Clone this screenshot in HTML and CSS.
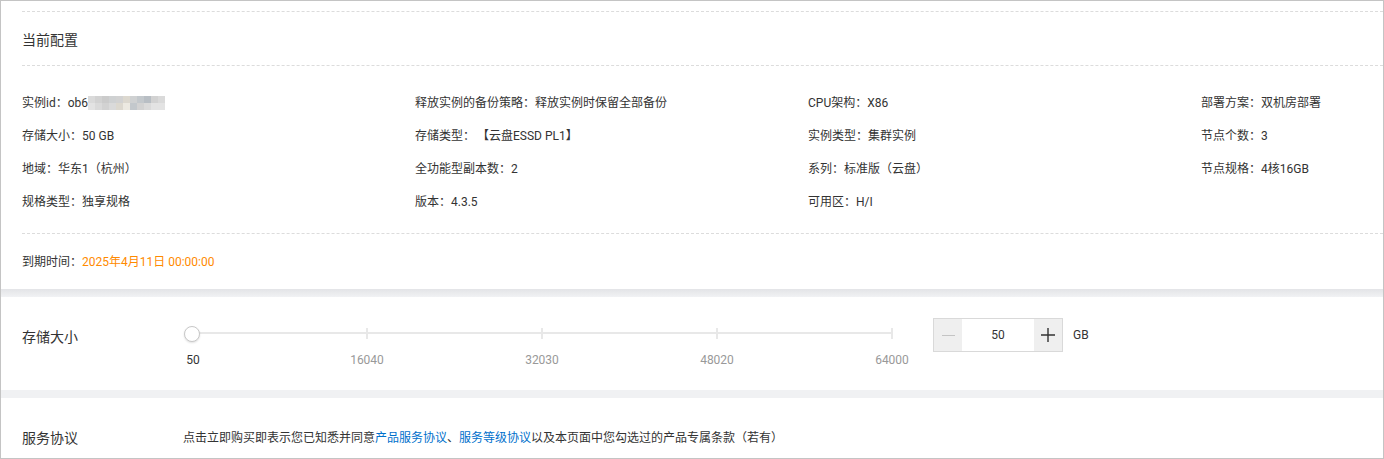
FILE: index.html
```html
<!DOCTYPE html>
<html lang="zh-CN">
<head>
    <meta charset="UTF-8">
    <meta name="viewport" content="width=device-width, initial-scale=1.0">
    <link rel="stylesheet" href="styles.css">
    <title>变配</title>
</head>
<body>
    <div class="page">
        <section class="config">
            <div class="prev-end"></div>
            <h3 class="config-title">当前配置</h3>
            <div class="config-grid">
                <div class="cfg-item">实例id：ob6<span class="mosaic"><i class="s2"></i><i class="s3"></i><i class="s4"></i><i class="s5"></i><i class="s3"></i><i class="s7"></i><i class="s5"></i><i class="s6"></i><i class="s8"></i><i class="s3"></i><i class="s2"></i><i class="s1"></i><i class="s2"></i><i class="s3"></i><i class="s2"></i><i class="s7"></i><i class="s9"></i><i class="s6"></i><i class="s3"></i><i class="s2"></i><i class="s1"></i><i class="s1"></i></span></div>
                <div class="cfg-item">释放实例的备份策略：释放实例时保留全部备份</div>
                <div class="cfg-item">CPU架构：X86</div>
                <div class="cfg-item">部署方案：双机房部署</div>

                <div class="cfg-item">存储大小：50 GB</div>
                <div class="cfg-item">存储类型：<span class="bracket">【云盘ESSD PL1】</span></div>
                <div class="cfg-item">实例类型：集群实例</div>
                <div class="cfg-item">节点个数：3</div>

                <div class="cfg-item">地域：华东1（杭州）</div>
                <div class="cfg-item">全功能型副本数：2</div>
                <div class="cfg-item">系列：标准版（云盘）</div>
                <div class="cfg-item">节点规格：4核16GB</div>

                <div class="cfg-item">规格类型：独享规格</div>
                <div class="cfg-item">版本：4.3.5</div>
                <div class="cfg-item">可用区：H/I</div>
            </div>
            <div class="expire">到期时间：<span class="expire-time">2025年4月11日 00:00:00</span></div>
        </section>

        <div class="band band-shadow"></div>

        <section class="storage">
            <div class="row-label storage-label">存储大小</div>
            <div class="slider">
                <div class="slider-track">
                    <span class="tick t1"></span>
                    <span class="tick t2"></span>
                    <span class="tick t3"></span>
                    <span class="tick t4"></span>
                    <span class="mark mark-active">50</span>
                    <span class="mark t1">16040</span>
                    <span class="mark t2">32030</span>
                    <span class="mark t3">48020</span>
                    <span class="mark t4">64000</span>
                </div>
                <span class="slider-thumb"></span>
            </div>
            <div class="stepper">
                <button type="button" class="step-btn step-disabled">
                    <svg width="13" height="13" viewBox="0 0 13 13"><path d="M0 6.5h13" stroke="#c4c4c4" stroke-width="1"/></svg>
                </button>
                <div class="step-input">50</div>
                <button type="button" class="step-btn">
                    <svg width="14" height="14" viewBox="0 0 14 14"><path d="M0 7h14M7 0v14" stroke="#333" stroke-width="1.4"/></svg>
                </button>
            </div>
            <span class="unit">GB</span>
        </section>

        <div class="band"></div>

        <section class="agreement">
            <div class="row-label agreement-label">服务协议</div>
            <p class="agreement-text">点击立即购买即表示您已知悉并同意<a href="#">产品服务协议</a>、<a href="#">服务等级协议</a>以及本页面中您勾选过的产品专属条款（若有）</p>
        </section>
    </div>
</body>
</html>
```

FILE: styles.css
```css
* {
    margin: 0;
    padding: 0;
    box-sizing: border-box;
}

html,
body {
    height: 100%;
}

body {
    font-family: Roboto, "Noto Sans CJK SC", sans-serif;
    font-size: 12px;
    color: #333;
    background-color: #fff;
}

.page {
    height: 100%;
    border: 1px solid #c4c4c4;
    overflow: hidden;
}

/* current config */
.config {
    padding-left: 21px;
}

.prev-end {
    height: 11px;
    border-bottom: 1px dashed #dcdcdc;
}

.config-title {
    font-size: 14px;
    font-weight: normal;
    line-height: 20px;
    height: 54px;
    padding: 18px 0 15px;
    border-bottom: 1px dashed #dcdcdc;
}

.config-grid {
    display: grid;
    grid-template-columns: repeat(4, 393px);
    grid-auto-rows: 20px;
    row-gap: 13px;
    line-height: 20px;
    padding: 27px 0 21px;
    border-bottom: 1px dashed #dcdcdc;
}

.cfg-item {
    height: 20px;
    white-space: nowrap;
    display: flex;
    align-items: center;
}

.bracket {
    margin-left: 2px;
}

.mosaic {
    display: grid;
    grid-template-columns: repeat(11, 7px);
    grid-auto-rows: 7px;
}

.mosaic i { background-color: #dcdcdc; }
.mosaic .s1 { background-color: #e3e3e3; }
.mosaic .s2 { background-color: #dadada; }
.mosaic .s3 { background-color: #d2d2d2; }
.mosaic .s4 { background-color: #cbcbcb; }
.mosaic .s5 { background-color: #cfd1d2; }
.mosaic .s6 { background-color: #c3c8cc; }
.mosaic .s7 { background-color: #dcd8cf; }
.mosaic .s8 { background-color: #b8bec4; }
.mosaic .s9 { background-color: #ece9e1; }

.expire {
    height: 55px;
    line-height: 20px;
    padding: 18px 0 17px;
}

.expire-time {
    color: #ff8a00;
}

.band {
    height: 8px;
    background-color: #f0f1f3;
}

.band-shadow {
    background: linear-gradient(#e3e4e7, #f1f2f4);
}

/* storage size */
.storage {
    height: 93px;
    display: flex;
    align-items: flex-start;
    padding: 21px 0 0 21px;
}

.row-label {
    font-size: 14px;
    line-height: 20px;
    height: 20px;
    flex-shrink: 0;
}

.storage-label {
    width: 162px;
    margin-top: 9px;
}

.slider {
    position: relative;
    width: 716px;
    height: 60px;
    margin-top: 8px;
    flex-shrink: 0;
}

.slider-track {
    position: absolute;
    left: 8px;
    right: 8px;
    top: 6px;
    height: 2px;
    background-color: #e8e8e8;
}

.tick {
    position: absolute;
    top: -4px;
    width: 2px;
    height: 11px;
    margin-left: -1px;
    background-color: #e8e8e8;
}

.mark {
    position: absolute;
    top: 18px;
    left: 0;
    line-height: 20px;
    color: #999;
    transform: translateX(-50%);
}

.mark-active {
    color: #333;
    margin-left: 1px;
}

.t1 { left: 25%; }
.t2 { left: 50%; }
.t3 { left: 75%; }
.t4 { left: 100%; }

.slider-thumb {
    position: absolute;
    left: 0;
    top: 0;
    width: 16px;
    height: 16px;
    border: 1px solid #c8c8c8;
    border-radius: 50%;
    background-color: #fff;
    box-shadow: 0 1px 2px rgba(0, 0, 0, 0.12);
}

.stepper {
    display: flex;
    height: 34px;
    margin-left: 33px;
    border: 1px solid #d9d9d9;
    flex-shrink: 0;
}

.step-btn {
    width: 28px;
    border: none;
    background-color: #efefef;
    display: flex;
    align-items: center;
    justify-content: center;
    cursor: pointer;
}

.step-disabled {
    cursor: not-allowed;
}

.step-input {
    width: 72px;
    line-height: 32px;
    text-align: center;
}

.unit {
    margin-left: 10px;
    line-height: 34px;
}

/* agreement */
.agreement {
    display: flex;
    padding: 30px 0 0 21px;
}

.agreement-label {
    width: 161px;
}

.agreement-text {
    line-height: 20px;
    height: 20px;
    white-space: nowrap;
}

.agreement-text a {
    color: #0070cc;
    text-decoration: none;
}
```
